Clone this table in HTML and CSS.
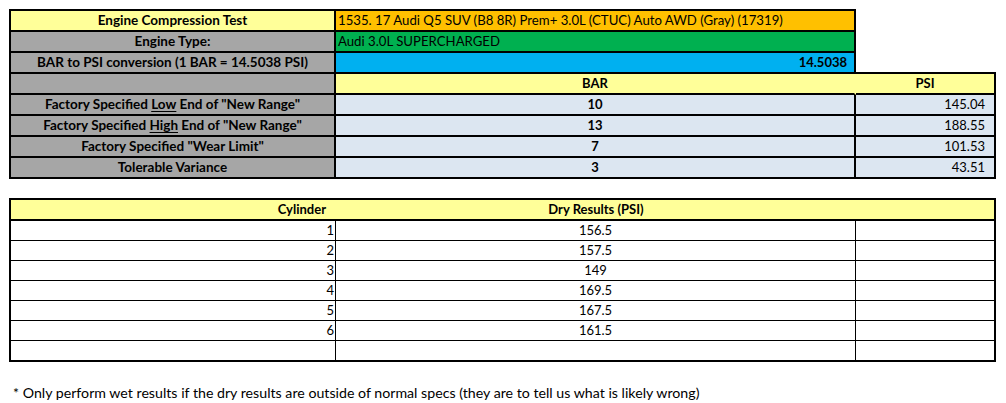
FILE: index.html
```html
<!DOCTYPE html>
<html lang="en">
<head>
<meta charset="utf-8">
<title>Engine Compression Test</title>
<link rel="stylesheet" href="styles.css">
</head>
<body>
<div class="sheet">
  <div class="spec">
    <div class="cell top lead label head">Engine Compression Test</div>
    <div class="cell top orange left">1535. 17 Audi Q5 SUV (B8 8R) Prem+ 3.0L (CTUC) Auto AWD (Gray) (17319)</div>
    <div class="cell void"></div>

    <div class="cell lead label">Engine Type:</div>
    <div class="cell green left">Audi 3.0L SUPERCHARGED</div>
    <div class="cell void"></div>

    <div class="cell lead label">BAR to PSI conversion (1 BAR = 14.5038 PSI)</div>
    <div class="cell blue right bold pad7">14.5038</div>
    <div class="cell void-edge"></div>

    <div class="cell lead label"></div>
    <div class="cell yellow bold merge">BAR</div>
    <div class="cell yellow bold">PSI</div>

    <div class="cell lead label">Factory Specified&nbsp;<u>Low</u>&nbsp;End of "New Range"</div>
    <div class="cell data bold">10</div>
    <div class="cell data right pad9">145.04</div>

    <div class="cell lead label">Factory Specified&nbsp;<u>High</u>&nbsp;End of "New Range"</div>
    <div class="cell data bold">13</div>
    <div class="cell data right pad9">188.55</div>

    <div class="cell lead label">Factory Specified "Wear Limit"</div>
    <div class="cell data bold">7</div>
    <div class="cell data right pad9">101.53</div>

    <div class="cell lead label">Tolerable Variance</div>
    <div class="cell data bold">3</div>
    <div class="cell data right pad9">43.51</div>
  </div>

  <div class="results">
    <div class="rc hdr lead right pad10">Cylinder</div>
    <div class="rc hdr">Dry Results (PSI)</div>
    <div class="rc hdr tail"></div>

    <div class="rc lead right pad2">1</div><div class="rc">156.5</div><div class="rc tail"></div>
    <div class="rc lead right pad2">2</div><div class="rc">157.5</div><div class="rc tail"></div>
    <div class="rc lead right pad2">3</div><div class="rc">149</div><div class="rc tail"></div>
    <div class="rc lead right pad2">4</div><div class="rc">169.5</div><div class="rc tail"></div>
    <div class="rc lead right pad2">5</div><div class="rc">167.5</div><div class="rc tail"></div>
    <div class="rc lead right pad2">6</div><div class="rc">161.5</div><div class="rc tail"></div>

    <div class="rc lead last"></div><div class="rc last"></div><div class="rc tail last"></div>
  </div>

  <p class="note">* Only perform wet results if the dry results are outside of normal specs (they are to tell us what is likely wrong)</p>
</div>
</body>
</html>
```

FILE: styles.css
```css
html, body {
  margin: 0;
  padding: 0;
  background: #ffffff;
}

body {
  font-family: "Lato", "Open Sans", "Liberation Sans", sans-serif;
  font-size: 13px;
  color: #000000;
}

.sheet {
  padding: 9px;
}

/* ---------- top specification table ---------- */
.spec {
  display: grid;
  grid-template-columns: 327px 520px 140px;
  grid-template-rows: 23px repeat(7, 21px);
}

.cell {
  box-sizing: border-box;
  border-right: 2px solid #000;
  border-bottom: 2px solid #000;
  display: flex;
  align-items: center;
  justify-content: center;
  white-space: nowrap;
  overflow: hidden;
  line-height: 19px;
}

.cell.top { border-top: 2px solid #000; }
.cell.lead { border-left: 2px solid #000; }

.cell.void {
  border: none;
}

.cell.void-edge {
  border-right: none;
}

.label {
  background: #a6a6a6;
  font-weight: 700;
  font-size: 13.5px;
}

.label.head {
  background: #ffff99;
}

.orange { background: #ffc000; font-size: 13.2px; }
.green { background: #00b050; font-size: 13.2px; }
.blue { background: #00b0f0; }
.yellow { background: #ffff99; }
.data { background: #dce6f1; }

.merge { border-right-color: #ffff99; }

.bold { font-weight: 700; }

.left {
  justify-content: flex-start;
  padding-left: 2px;
}

.right { justify-content: flex-end; }

.pad7 { padding-right: 7px; }
.pad9 { padding-right: 9px; }
.pad10 { padding-right: 10px; }
.pad2 { padding-right: 1px; }

u {
  text-decoration: underline;
  text-underline-offset: 2px;
}

/* ---------- results table ---------- */
.results {
  display: grid;
  grid-template-columns: 327px 520px 140px;
  grid-template-rows: 23px repeat(6, 20px) 21px;
  margin-top: 19px;
}

.rc {
  box-sizing: border-box;
  border-right: 1px solid #000;
  border-bottom: 1px solid #000;
  display: flex;
  align-items: center;
  justify-content: center;
  white-space: nowrap;
  line-height: 19px;
  background: #ffffff;
}

.rc.lead { border-left: 2px solid #000; }
.rc.tail { border-right: 2px solid #000; }
.rc.last { border-bottom: 2px solid #000; }

.rc.hdr {
  background: #ffff99;
  font-weight: 700;
  border-top: 2px solid #000;
  border-bottom: 2px solid #000;
  border-right: none;
}

.rc.hdr.tail { border-right: 2px solid #000; }

.rc.right { justify-content: flex-end; }

/* ---------- footnote ---------- */
.note {
  margin: 21px 0 0 0;
  padding-left: 4px;
  font-size: 14.2px;
  line-height: 19px;
  white-space: nowrap;
}
```
